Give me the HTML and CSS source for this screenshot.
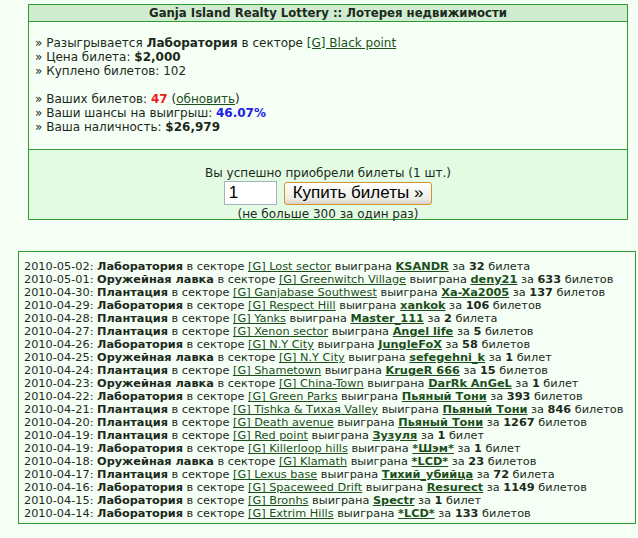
FILE: index.html
```html
<!DOCTYPE html>
<html lang="ru">
<head>
  <meta charset="UTF-8">
  <title>Ganja Island Realty Lottery</title>
  <link rel="stylesheet" href="styles.css">
</head>
<body>
  <div class="lottery">
    <div class="lottery-head">Ganja Island Realty Lottery :: Лотерея недвижимости</div>
    <div class="lottery-info">
      <div>» Разыгрывается <b>Лаборатория</b> в секторе <a href="#">[G] Black point</a></div>
      <div>» Цена билета: <b>$2,000</b></div>
      <div>» Куплено билетов: 102</div>
      <div class="gap"></div>
      <div>» Ваших билетов: <b class="red">47</b> (<a href="#">обновить</a>)</div>
      <div>» Ваши шансы на выигрыш: <b class="blue">46.07%</b></div>
      <div>» Ваша наличность: <b>$26,979</b></div>
    </div>
    <form class="lottery-buy">
      <div>Вы успешно приобрели билеты (1 шт.)</div>
      <div class="buy-row">
        <input type="text" class="buy-count" value="1">
        <button type="button" class="buy-btn">Купить билеты »</button>
      </div>
      <div>(не больше 300 за один раз)</div>
    </form>
  </div>

  <div class="history">
    <div>2010-05-02: <b>Лаборатория</b> в секторе <a href="#">[G] Lost sector</a> выиграна <a class="who" href="#">KSANDR</a> за <b>32</b> билета</div>
    <div>2010-05-01: <b>Оружейная лавка</b> в секторе <a href="#">[G] Greenwitch Village</a> выиграна <a class="who" href="#">deny21</a> за <b>633</b> билетов</div>
    <div>2010-04-30: <b>Плантация</b> в секторе <a href="#">[G] Ganjabase Southwest</a> выиграна <a class="who" href="#">Xa-Xa2005</a> за <b>137</b> билетов</div>
    <div>2010-04-29: <b>Лаборатория</b> в секторе <a href="#">[G] Respect Hill</a> выиграна <a class="who" href="#">xankok</a> за <b>106</b> билетов</div>
    <div>2010-04-28: <b>Плантация</b> в секторе <a href="#">[G] Yanks</a> выиграна <a class="who" href="#">Master_111</a> за <b>2</b> билета</div>
    <div>2010-04-27: <b>Плантация</b> в секторе <a href="#">[G] Xenon sector</a> выиграна <a class="who" href="#">Angel life</a> за <b>5</b> билетов</div>
    <div>2010-04-26: <b>Лаборатория</b> в секторе <a href="#">[G] N.Y City</a> выиграна <a class="who" href="#">JungleFoX</a> за <b>58</b> билетов</div>
    <div>2010-04-25: <b>Оружейная лавка</b> в секторе <a href="#">[G] N.Y City</a> выиграна <a class="who" href="#">sefegehni_k</a> за <b>1</b> билет</div>
    <div>2010-04-24: <b>Плантация</b> в секторе <a href="#">[G] Shametown</a> выиграна <a class="who" href="#">KrugeR 666</a> за <b>15</b> билетов</div>
    <div>2010-04-23: <b>Оружейная лавка</b> в секторе <a href="#">[G] China-Town</a> выиграна <a class="who" href="#">DarRk AnGeL</a> за <b>1</b> билет</div>
    <div>2010-04-22: <b>Лаборатория</b> в секторе <a href="#">[G] Green Parks</a> выиграна <a class="who" href="#">Пьяный Тони</a> за <b>393</b> билетов</div>
    <div>2010-04-21: <b>Плантация</b> в секторе <a href="#">[G] Tishka &amp; Тихая Valley</a> выиграна <a class="who" href="#">Пьяный Тони</a> за <b>846</b> билетов</div>
    <div>2010-04-20: <b>Плантация</b> в секторе <a href="#">[G] Death avenue</a> выиграна <a class="who" href="#">Пьяный Тони</a> за <b>1267</b> билетов</div>
    <div>2010-04-19: <b>Плантация</b> в секторе <a href="#">[G] Red point</a> выиграна <a class="who" href="#">Зузуля</a> за <b>1</b> билет</div>
    <div>2010-04-19: <b>Лаборатория</b> в секторе <a href="#">[G] Killerloop hills</a> выиграна <a class="who" href="#">*Шэм*</a> за <b>1</b> билет</div>
    <div>2010-04-18: <b>Оружейная лавка</b> в секторе <a href="#">[G] Klamath</a> выиграна <a class="who" href="#">*LCD*</a> за <b>23</b> билетов</div>
    <div>2010-04-17: <b>Плантация</b> в секторе <a href="#">[G] Lexus base</a> выиграна <a class="who" href="#">Тихий_убийца</a> за <b>72</b> билета</div>
    <div>2010-04-16: <b>Лаборатория</b> в секторе <a href="#">[G] Spaceweed Drift</a> выиграна <a class="who" href="#">Resurect</a> за <b>1149</b> билетов</div>
    <div>2010-04-15: <b>Лаборатория</b> в секторе <a href="#">[G] Bronhs</a> выиграна <a class="who" href="#">Spectr</a> за <b>1</b> билет</div>
    <div>2010-04-14: <b>Лаборатория</b> в секторе <a href="#">[G] Extrim Hills</a> выиграна <a class="who" href="#">*LCD*</a> за <b>133</b> билетов</div>
  </div>
</body>
</html>
```

FILE: styles.css
```css
body {
  margin: 0;
  padding: 4px 10px 0 18px;
  background-color: #f5fff5;
  color: #1c2a1c;
  font-family: "DejaVu Sans", Verdana, sans-serif;
  font-size: 12px;
}
a {
  color: #1c4f1c;
}
.lottery {
  margin-left: 10px;
  width: 598px;
  border: 1px solid #2f9a2f;
}
.lottery-head {
  height: 16px;
  line-height: 17px;
  background-color: #d0ecd0;
  border-bottom: 1px solid #2f9a2f;
  text-align: center;
  font-size: 11.7px;
  font-weight: bold;
}
.lottery-info {
  padding: 14px 6px 15px;
  line-height: 14px;
}
.lottery-info .gap {
  height: 14px;
}
.red {
  color: #f01c1c;
}
.blue {
  color: #2020e8;
}
.lottery-buy {
  margin: 0;
  padding: 16px 0 0;
  height: 53px;
  border-top: 1px solid #2f9a2f;
  background-color: #e2fbe2;
  text-align: center;
  line-height: 14px;
}
.buy-row {
  display: flex;
  justify-content: center;
  align-items: center;
  gap: 7px;
  padding: 1px 0 2px;
}
.buy-count {
  box-sizing: border-box;
  width: 53px;
  height: 24px;
  padding: 1px 4px;
  border: 1px solid #a5b3c0;
  background: #fff;
  font-family: "Liberation Sans", Arial, sans-serif;
  font-size: 17px;
}
.buy-btn {
  box-sizing: border-box;
  height: 23px;
  padding: 0 8px;
  border: 1px solid #d49330;
  border-radius: 3px;
  background: linear-gradient(#ffffff, #eeede8 75%, #d8d2c6);
  color: #000;
  font-family: "Liberation Sans", Arial, sans-serif;
  font-size: 17px;
}
.history {
  margin-top: 31px;
  width: 611px;
  padding: 8px 0 3px 5px;
  border: 1px solid #2f9a2f;
  font-size: 11.3px;
  line-height: 13px;
}
.history .who {
  font-weight: bold;
}
```
